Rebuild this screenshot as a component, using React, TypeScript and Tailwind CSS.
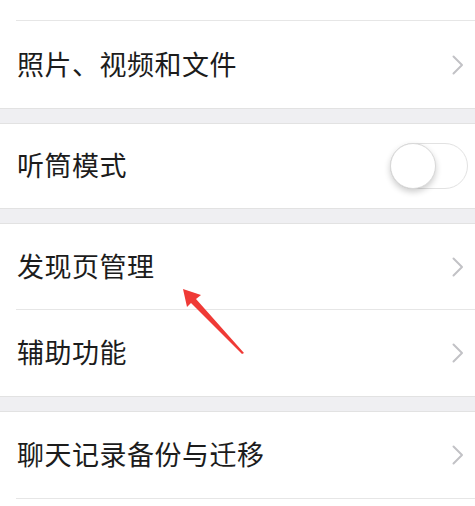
import React from 'react';

const FONT = '"Noto Sans CJK SC", "Noto Sans", sans-serif';

function Chevron() {
  return (
    <svg width="12" height="20" viewBox="0 0 12 20" fill="none" className="shrink-0">
      <path d="M1.5 1.5 L10 10 L1.5 18.5" stroke="#c2c2c6" strokeWidth="2" strokeLinecap="round" strokeLinejoin="round" />
    </svg>
  );
}

function Toggle() {
  return (
    <div className="relative w-[78px] h-[46px] rounded-full border border-[#e2e2e2] bg-white shrink-0">
      <div className="absolute left-[-1px] top-[-1px] w-[46px] h-[46px] rounded-full bg-white border border-[#d8d8d8] shadow-[0_3px_6px_rgba(0,0,0,0.2)]" />
    </div>
  );
}

interface RowProps {
  label: string;
  height: string;
  toggle?: boolean;
}

function Row({ label, height, toggle }: RowProps) {
  return (
    <div className={`flex items-center justify-between pl-[17px] ${toggle ? 'pr-[7px]' : 'pr-[11px]'} ${height}`}>
      <span className="pb-[3px] text-[27px] leading-none text-[#1c1c1c] tracking-[0.5px]">{label}</span>
      {toggle ? <Toggle /> : <Chevron />}
    </div>
  );
}

function Divider() {
  return <div className="ml-4 h-px bg-[#e6e6e6]" />;
}

export default function App() {
  return (
    <div className="relative w-[475px] h-[506px] overflow-hidden bg-[#efeff2]" style={{ fontFamily: FONT }}>
      <div className="bg-white border-b border-[#e2e2e2]">
        <div className="h-[20px]" />
        <Divider />
        <Row label="照片、视频和文件" height="h-[87px]" />
      </div>

      <div className="mt-[14px] bg-white border-y border-[#e2e2e2]">
        <Row label="听筒模式" height="h-[84px]" toggle />
      </div>

      <div className="mt-[14px] bg-white border-y border-[#e2e2e2]">
        <Row label="发现页管理" height="h-[85px]" />
        <Divider />
        <Row label="辅助功能" height="h-[86px]" />
      </div>

      <div className="mt-[14px] bg-white border-t border-[#e2e2e2] h-[120px]">
        <Row label="聊天记录备份与迁移" height="h-[86px]" />
        <Divider />
      </div>

      <svg className="absolute left-0 top-0 pointer-events-none" width="475" height="506" viewBox="0 0 475 506">
        <polygon
          points="183,289 201,295 196,299 244,353 242,354 191,303 187,307"
          fill="#ef3a36"
        />
      </svg>
    </div>
  );
}
